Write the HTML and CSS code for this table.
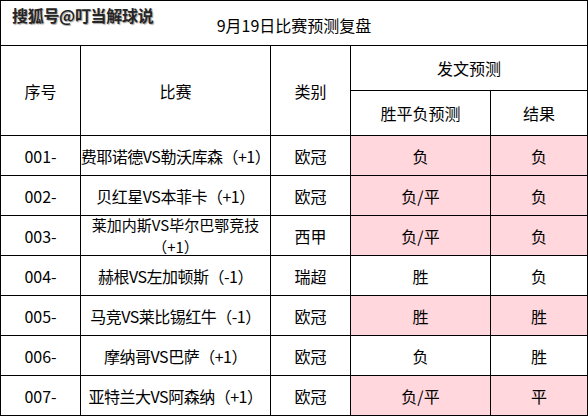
FILE: index.html
```html
<!DOCTYPE html>
<html lang="zh-CN">
<head>
<meta charset="utf-8">
<title>9月19日比赛预测复盘</title>
<link rel="stylesheet" href="styles.css">
</head>
<body>
<div class="sheet">
  <div class="watermark">搜狐号@叮当解球说</div>
  <div class="grid">
    <div class="cell title">9月19日比赛预测复盘</div>

    <div class="cell hd h-no">序号</div>
    <div class="cell hd h-match">比赛</div>
    <div class="cell hd h-type">类别</div>
    <div class="cell hd h-group">发文预测</div>
    <div class="cell hd h-pred">胜平负预测</div>
    <div class="cell hd h-res">结果</div>

    <div class="cell">001-</div>
    <div class="cell match">费耶诺德VS勒沃库森（+1）</div>
    <div class="cell">欧冠</div>
    <div class="cell pink">负</div>
    <div class="cell pink">负</div>

    <div class="cell">002-</div>
    <div class="cell match">贝红星VS本菲卡（+1）</div>
    <div class="cell">欧冠</div>
    <div class="cell pink">负/平</div>
    <div class="cell pink">负</div>

    <div class="cell">003-</div>
    <div class="cell match two"><span class="line">莱加内斯VS毕尔巴鄂竞技</span><span class="line">（+1）</span></div>
    <div class="cell">西甲</div>
    <div class="cell pink">负/平</div>
    <div class="cell pink">负</div>

    <div class="cell">004-</div>
    <div class="cell match">赫根VS左加顿斯（-1）</div>
    <div class="cell">瑞超</div>
    <div class="cell">胜</div>
    <div class="cell">负</div>

    <div class="cell">005-</div>
    <div class="cell match">马竞VS莱比锡红牛（-1）</div>
    <div class="cell">欧冠</div>
    <div class="cell pink">胜</div>
    <div class="cell pink">胜</div>

    <div class="cell">006-</div>
    <div class="cell match">摩纳哥VS巴萨（+1）</div>
    <div class="cell">欧冠</div>
    <div class="cell">负</div>
    <div class="cell">胜</div>

    <div class="cell">007-</div>
    <div class="cell match">亚特兰大VS阿森纳（+1）</div>
    <div class="cell">欧冠</div>
    <div class="cell pink">负/平</div>
    <div class="cell pink">平</div>
  </div>
</div>
</body>
</html>
```

FILE: styles.css
```css
html, body {
  margin: 0;
  padding: 0;
  background: #ffffff;
}

body {
  font-family: "Noto Sans CJK SC", "Noto Sans", sans-serif;
  font-size: 16px;
  color: #000000;
}

.sheet {
  position: relative;
  width: 588px;
  height: 416px;
}

.grid {
  display: grid;
  grid-template-columns: 80px 190px 80px 140px 97px;
  grid-template-rows: 45px 45px 45px repeat(7, 40px);
  border-left: 1px solid #000;
  border-top: 1px solid #000;
  width: 588px;
  box-sizing: border-box;
}

.cell {
  box-sizing: border-box;
  border-right: 1px solid #000;
  border-bottom: 1px solid #000;
  display: flex;
  align-items: center;
  justify-content: center;
  text-align: center;
  line-height: 20px;
  white-space: nowrap;
  background: #ffffff;
}

.title {
  grid-column: 1 / 6;
  padding-top: 3px;
}

.h-no { grid-column: 1; grid-row: 2 / 4; }
.h-match { grid-column: 2; grid-row: 2 / 4; }
.h-type { grid-column: 3; grid-row: 2 / 4; }
.h-group { grid-column: 4 / 6; grid-row: 2; }
.h-pred { grid-column: 4; grid-row: 3; }
.h-res { grid-column: 5; grid-row: 3; }

.match {
  letter-spacing: -0.5px;
}

.two {
  flex-direction: column;
  font-size: 15px;
  letter-spacing: 0;
}

.line {
  display: block;
  line-height: 22px;
}

.pink {
  background: #ffd7dc;
}

.watermark {
  position: absolute;
  left: 12px;
  top: 6px;
  font-size: 16px;
  line-height: 18px;
  font-weight: 700;
  color: #262626;
  letter-spacing: -0.3px;
  text-shadow: 1px 1px 1px rgba(0, 0, 0, 0.35), 0 0 2px #ffffff;
}
```
